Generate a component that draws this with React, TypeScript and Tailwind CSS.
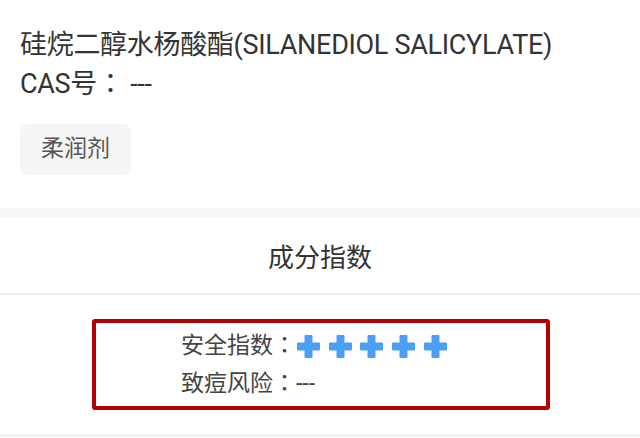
import React from 'react';

const font = { fontFamily: 'Roboto, "Noto Sans CJK SC", sans-serif' };

// centred full-width colon, as drawn on the phone
const Colon = () => <span className="font-['Noto_Sans_CJK_TC',sans-serif] leading-none">：</span>;

const Plus = () => (
  <svg width="23" height="23" viewBox="0 0 23 23" className="shrink-0">
    <rect x="7.5" y="0" width="8" height="23" rx="1" fill="#4a9ff5" />
    <rect x="0" y="7.5" width="23" height="8" rx="1" fill="#4a9ff5" />
  </svg>
);

const App = () => {
  return (
    <div className="w-[640px] h-[438px] overflow-hidden bg-white" style={font}>
      {/* ingredient info */}
      <div className="px-5 pt-[26px] pb-[33px]">
        <div className="h-[39px] text-[27px] leading-[39px] tracking-[-0.3px] text-[#333]">
          硅烷二醇水杨酸酯(SILANEDIOL SALICYLATE)
        </div>
        <div className="h-[39px] text-[27px] leading-[39px] tracking-[-0.3px] text-[#333]">
          CAS号<Colon /> ---
        </div>
        <div className="mt-5 flex">
          <span className="flex h-[51px] items-center rounded-lg bg-[#f5f5f5] px-[21px] text-[23px] text-[#555]">
            柔润剂
          </span>
        </div>
      </div>

      <div className="h-[10px] bg-[#f6f6f6]" />

      {/* index section */}
      <div className="flex h-[77px] items-center justify-center border-b-2 border-[#eeeeee] pt-[6px] text-[26px] text-[#333]">
        成分指数
      </div>

      <div className="pt-[24px] pb-[24px] border-b-[3px] border-[#f3f3f3]">
        <div className="ml-[92px] w-[458px] rounded-[3px] border-4 border-[#b30000] pl-[85px] pt-[4px] pb-[3px] text-[23px] leading-[38px] text-[#444]">
          <div className="flex h-[38px] items-center">
            <span>
              安全指数<Colon />
            </span>
            <span className="ml-px flex items-center gap-[8.7px]">
              <Plus />
              <Plus />
              <Plus />
              <Plus />
              <Plus />
            </span>
          </div>
          <div className="h-[38px]">
            致痘风险<Colon />---
          </div>
        </div>
      </div>
    </div>
  );
};

export default App;
